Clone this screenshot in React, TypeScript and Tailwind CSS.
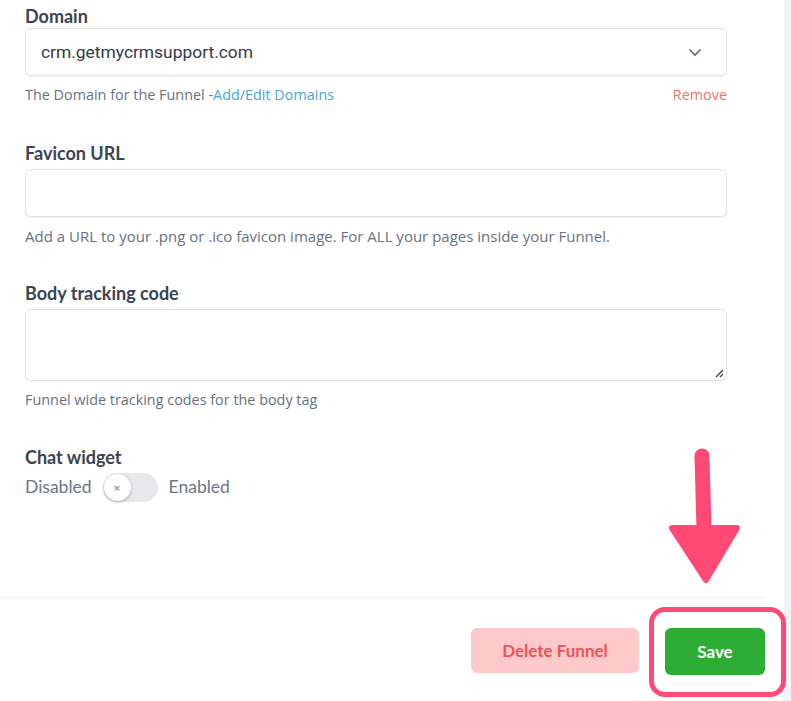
import { useState } from 'react';

const labelCls = "block text-[18px] leading-6 font-bold text-[#3b4452]";
const helpCls = "font-['Open_Sans',sans-serif] text-[14.4px] leading-5 text-[#67727e]";
const boxCls = "w-full rounded-md border border-[#dfe3e8] bg-white shadow-[0_1px_2px_rgba(0,0,0,0.06)]";

function Arrow() {
    // flecha rosa que apunta al botón Save
    return (
        <svg className="absolute left-[664px] top-[448px]" width="80" height="140" viewBox="0 0 80 140">
            <path d="M38 8 L40 82" stroke="#ff4a75" strokeWidth="15" strokeLinecap="round" />
            <path d="M8 80 L73 80 L42 132 Z" fill="#ff4a75" stroke="#ff4a75" strokeWidth="6" strokeLinejoin="round" />
        </svg>
    );
}

export default function App() {
    const [chat, setChat] = useState(false);

    return (
        <div className="relative flex w-[791px] h-[701px] overflow-hidden bg-white font-['Lato',sans-serif]">
            <div className="w-[784px] flex flex-col">
                <div className="px-[25px] pr-[57px] pt-[4px]">
                    {/* Domain */}
                    <label className={labelCls}>Domain</label>
                    <div className={`${boxCls} h-[48px] flex items-center justify-between pl-[15px] pr-[24px]`}>
                        <span className="font-['Roboto',sans-serif] text-[17.4px] text-[#333a44]">crm.getmycrmsupport.com</span>
                        <svg width="14" height="9" viewBox="0 0 14 9">
                            <path d="M1.5 1.5 L7 7 L12.5 1.5" fill="none" stroke="#5b6b7b" strokeWidth="1.6" />
                        </svg>
                    </div>
                    <div className={`${helpCls} mt-[9px] flex justify-between`}>
                        <span>The Domain for the Funnel -<span className="text-[#4a9fdc]">Add/Edit Domains</span></span>
                        <span className="text-[#f0706a]">Remove</span>
                    </div>

                    {/* Favicon */}
                    <label className={`${labelCls} mt-[36px]`}>Favicon URL</label>
                    <div className={`${boxCls} h-[48px] mt-[4px]`} />
                    <p className={`${helpCls} !text-[15px] mt-[9px]`}>Add a URL to your .png or .ico favicon image. For ALL your pages inside your Funnel.</p>

                    {/* Body tracking */}
                    <label className={`${labelCls} mt-[35px]`}>Body tracking code</label>
                    <div className={`${boxCls} relative h-[72px] mt-[4px]`}>
                        <svg className="absolute right-[2px] bottom-[2px]" width="10" height="10" viewBox="0 0 10 10">
                            <path d="M9 2 L2 9 M9 6 L6 9" stroke="#444" strokeWidth="1.4" />
                        </svg>
                    </div>
                    <p className={`${helpCls} mt-[9px]`}>Funnel wide tracking codes for the body tag</p>

                    {/* Chat widget */}
                    <label className={`${labelCls} mt-[35px]`}>Chat widget</label>
                    <div className="mt-[4px] flex items-center gap-[11px] text-[17.5px] text-[#6b7785]">
                        <span>Disabled</span>
                        <button
                            type="button"
                            onClick={() => setChat(!chat)}
                            className="relative w-[55px] h-[29px] rounded-full bg-[#e6e8ec]"
                        >
                            <span className={`absolute top-[1px] left-[1px] w-[27px] h-[27px] rounded-full bg-white shadow-[0_1px_3px_rgba(0,0,0,0.3)] flex items-center justify-center text-[12px] font-bold text-[#8a929c] ${chat ? 'translate-x-[26px]' : ''}`}>
                                ×
                            </span>
                        </button>
                        <span>Enabled</span>
                    </div>
                </div>

                {/* Footer */}
                <div className="mt-auto mb-[26px] w-[765px] border-t border-[#f0f2f5] pt-[30px] flex justify-end gap-[26px]">
                    <button type="button" className="w-[168px] h-[45px] rounded-md bg-[#fdc9ca] text-[17px] font-bold text-[#ef5257]">
                        Delete Funnel
                    </button>
                    <button type="button" className="w-[100px] h-[47px] rounded-md bg-[#2ead35] text-[17px] font-bold text-white">
                        Save
                    </button>
                </div>
            </div>
            <div className="flex-1 bg-[#f1f5f9]" />

            {/* resaltado */}
            <div className="absolute left-[649px] top-[607px] w-[137px] h-[90px] rounded-[16px] border-[5px] border-[#ff4a75]" />
            <Arrow />
        </div>
    );
}
